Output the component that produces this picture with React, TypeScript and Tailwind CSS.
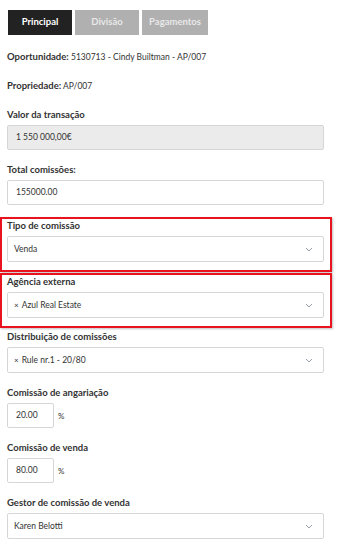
import { ReactNode } from 'react';

const font = { fontFamily: 'Lato, "Open Sans", sans-serif' };

function Chevron() {
    return (
        <svg width="8" height="5" viewBox="0 0 8 5" className="text-gray-400">
            <path d="M1 1l3 3 3-3" fill="none" stroke="currentColor" strokeWidth="1" />
        </svg>
    );
}

interface FieldProps {
    label: string;
    children: ReactNode;
    highlight?: boolean;
    className?: string;
}

function Field({ label, children, highlight = false, className = '' }: FieldProps) {
    return (
        <div className={`relative ${className}`}>
            {highlight && (
                <div className="absolute left-[-7px] right-[-8px] top-[-2px] bottom-[-10px] border-2 border-[#e8131f] shadow-[1px_1px_2px_rgba(0,0,0,0.25)] pointer-events-none" />
            )}
            <div className="text-[9.5px] leading-[14px] font-bold text-[#333] mb-[3px]">{label}</div>
            {children}
        </div>
    );
}

function SelectBox({ value, tag = false }: { value: string; tag?: boolean }) {
    return (
        <div className="h-[26px] border border-[#d6d6d6] rounded-[2px] bg-white flex items-center justify-between pl-[6px] pr-[10px] text-[8.5px] text-[#333]">
            <span>
                {tag && <span className="mr-[3px] text-[8px]">×</span>}
                {value}
            </span>
            <Chevron />
        </div>
    );
}

export default function App() {
    return (
        <div style={font} className="w-[350px] h-[555px] bg-white px-[7px] pt-[10px] overflow-hidden">
            <div className="flex gap-[3px] pl-[1px] h-[25px]">
                <div className="w-[64px] bg-[#222] text-white text-[9.5px] font-bold flex items-center justify-center">
                    Principal
                </div>
                <div className="w-[64px] bg-[#b0b0b0] text-[#e8e8e8] text-[9.5px] font-bold flex items-center justify-center">
                    Divisão
                </div>
                <div className="w-[66px] bg-[#b0b0b0] text-[#e8e8e8] text-[9.5px] font-bold flex items-center justify-center">
                    Pagamentos
                </div>
            </div>

            <div className="mt-[15px] text-[8.5px] leading-[14px] text-[#333]">
                <span className="font-bold text-[9.5px]">Oportunidade:</span> 5130713 - Cindy Builtman - AP/007
            </div>
            <div className="mt-[15px] text-[8.5px] leading-[14px] text-[#333]">
                <span className="font-bold text-[9.5px]">Propriedade:</span> AP/007
            </div>

            <div className="w-[317px] mt-[15px] flex flex-col">
                <Field label="Valor da transação">
                    <div className="h-[25px] border border-[#d6d6d6] rounded-[2px] bg-[#ebebeb] flex items-center pl-[8px] text-[8.5px] text-[#333]">
                        1 550 000,00€
                    </div>
                </Field>
                <Field label="Total comissões:" className="mt-[13px]">
                    <div className="h-[25px] border border-[#d6d6d6] rounded-[2px] bg-white flex items-center pl-[8px] text-[8.5px] text-[#333]">
                        155000.00
                    </div>
                </Field>
                <Field label="Tipo de comissão" highlight className="mt-[14px]">
                    <SelectBox value="Venda" />
                </Field>
                <Field label="Agência externa" highlight className="mt-[13px]">
                    <SelectBox value="Azul Real Estate" tag />
                </Field>
                <Field label="Distribuição de comissões" className="mt-[12px]">
                    <SelectBox value="Rule nr.1 - 20/80" tag />
                </Field>
                <Field label="Comissão de angariação" className="mt-[13px]">
                    <div className="flex items-center">
                        <div className="w-[47px] h-[25px] border border-[#d6d6d6] rounded-[2px] bg-white flex items-center pl-[8px] text-[8.5px] text-[#333]">
                            20.00
                        </div>
                        <span className="ml-[4px] text-[8px] text-[#333]">%</span>
                    </div>
                </Field>
                <Field label="Comissão de venda" className="mt-[13px]">
                    <div className="flex items-center">
                        <div className="w-[47px] h-[25px] border border-[#d6d6d6] rounded-[2px] bg-white flex items-center pl-[8px] text-[8.5px] text-[#333]">
                            80.00
                        </div>
                        <span className="ml-[4px] text-[8px] text-[#333]">%</span>
                    </div>
                </Field>
                <Field label="Gestor de comissão de venda" className="mt-[13px]">
                    <SelectBox value="Karen Belotti" />
                </Field>
            </div>
        </div>
    );
}
